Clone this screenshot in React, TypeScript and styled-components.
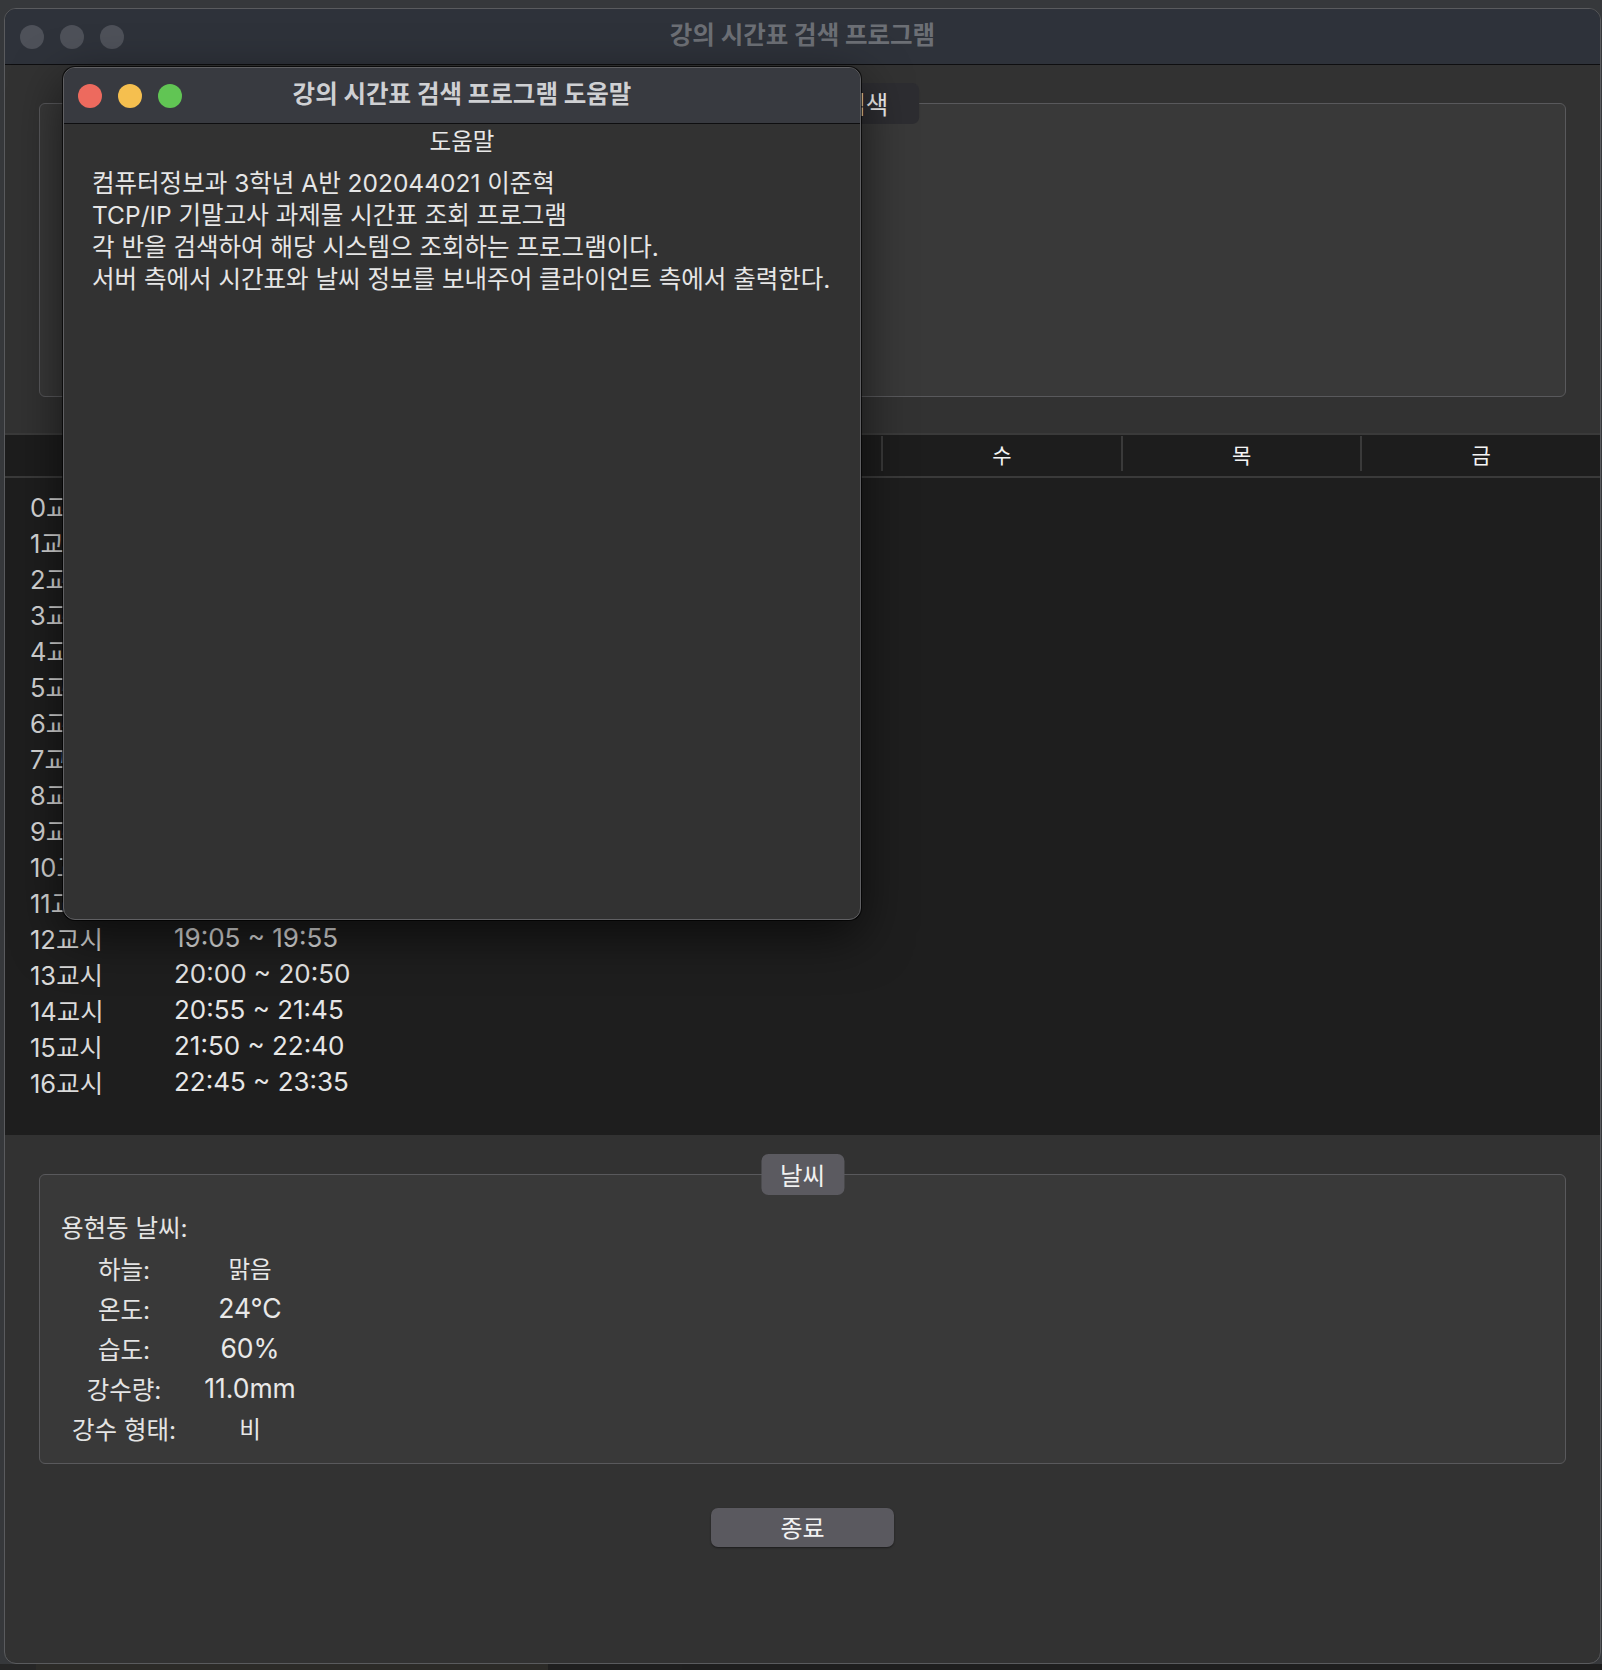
import styled, { createGlobalStyle } from "styled-components";

const GlobalStyle = createGlobalStyle`
  html, body {
    margin: 0;
    padding: 0;
    background: #36383b;
  }
  body {
    font-family: Inter, "Noto Sans CJK KR", "Noto Sans", sans-serif;
    color: #e6e6e6;
  }
`;

const Page = styled.div`
  position: relative;
  width: 1602px;
  height: 1670px;
  display: flex;
  flex-direction: column;
  background: #36383b;
  overflow: hidden;
`;

const TopStrip = styled.div`
  height: 8px;
  flex: none;
`;

const MainWindow = styled.div`
  margin-left: 4px;
  width: 1597px;
  height: 1656px;
  flex: none;
  box-sizing: border-box;
  border: 1px solid #5a5b5e;
  border-radius: 12px;
  background: #323232;
  display: flex;
  flex-direction: column;
  overflow: hidden;
`;

const TitleBar = styled.div<{ $active?: boolean }>`
  flex: none;
  height: 56px;
  box-sizing: border-box;
  border-bottom: 1px solid #0e0e10;
  background: ${(p) => (p.$active ? "#383a40" : "#2e323a")};
  display: grid;
  grid-template-columns: 1fr auto 1fr;
  align-items: center;
`;

const Lights = styled.div<{ $pad: number }>`
  display: flex;
  gap: 16px;
  padding-left: ${(p) => p.$pad}px;
`;

const Light = styled.span<{ $color: string }>`
  width: 24px;
  height: 24px;
  border-radius: 50%;
  background: ${(p) => p.$color};
`;

const Title = styled.div<{ $active?: boolean }>`
  font-size: 24.5px;
  font-weight: 700;
  color: ${(p) => (p.$active ? "#cfd0d3" : "#6c6f75")};
  margin-top: -7px;
`;

const Content = styled.div`
  flex: 1;
  display: flex;
  flex-direction: column;
`;

const GroupBox = styled.div<{ $top: number; $height: number }>`
  position: relative;
  margin: ${(p) => p.$top}px 34px 0;
  height: ${(p) => p.$height}px;
  flex: none;
  box-sizing: border-box;
  border: 1px solid #59595c;
  border-radius: 6px;
  background: #393939;
`;

const Legend = styled.div<{ $dark?: boolean }>`
  position: absolute;
  top: -21px;
  left: 50%;
  transform: translateX(-50%);
  height: 41px;
  padding: 0 ${(p) => (p.$dark ? 31 : 19)}px;
  display: flex;
  align-items: center;
  white-space: nowrap;
  border-radius: 7px;
  font-size: 24.5px;
  color: #f0f0f0;
  background: ${(p) => (p.$dark ? "#2d2d31" : "#5b5a60")};
`;

const Table = styled.div`
  margin-top: 36px;
  flex: none;
  background: #1e1e1e;
  display: flex;
  flex-direction: column;
`;

const HeaderRow = styled.div`
  display: grid;
  grid-template-columns: 397px repeat(5, 1fr);
  border-top: 2px solid #3a3a3a;
  border-bottom: 2px solid #3a3a3a;
  background: #1d1d1d;
  padding: 3px 0 5px;
`;

const HeaderCell = styled.div<{ $first?: boolean }>`
  height: 35px;
  display: flex;
  align-items: center;
  justify-content: center;
  border-left: ${(p) => (p.$first ? "none" : "2px solid #3a3a3a")};
  font-size: 21px;
  color: #f4f4f4;
  margin-top: -2px;
`;

const Body = styled.div`
  padding: 9px 0 36px;
  display: flex;
  flex-direction: column;
`;

const PeriodRow = styled.div`
  height: 36px;
  display: grid;
  grid-template-columns: 144px auto;
  align-items: center;
  padding-left: 25px;
`;

const PeriodLabel = styled.span`
  font-size: 25.5px;
  color: #dadada;
`;

const PeriodTime = styled.span`
  font-size: 26px;
  color: #e6e6e6;
`;

const WeatherBody = styled.div`
  padding: 33px 0 0 21px;
  display: flex;
  flex-direction: column;
`;

const WeatherHeading = styled.div`
  height: 40px;
  line-height: 40px;
  font-size: 24.5px;
  color: #e4e4e4;
`;

const WeatherGrid = styled.div`
  display: grid;
  grid-template-columns: 126px 126px;
  grid-auto-rows: 40px;
  align-items: center;
  justify-items: center;
`;

const WeatherKey = styled.span`
  font-size: 24.5px;
  color: #e4e4e4;
`;

const WeatherValue = styled.span<{ $numeric?: boolean }>`
  font-size: ${(p) => (p.$numeric ? 26.5 : 23.5)}px;
  color: #e8e8e8;
`;

const ExitButton = styled.button`
  margin-top: 44px;
  align-self: center;
  width: 183px;
  height: 39px;
  border: none;
  border-radius: 7px;
  background: #5a595f;
  box-shadow: 0 1px 2px rgba(0, 0, 0, 0.45);
  font-family: inherit;
  font-size: 24px;
  color: #f2f2f2;
  padding: 0 0 3px;
`;

const BottomStrip = styled.div`
  flex: 1;
  display: grid;
  grid-template-columns: 36px 512px 134px 1fr;
  background: #1f1f1f;
`;

const StripPart = styled.div<{ $bg: string }>`
  background: ${(p) => p.$bg};
`;

const Dialog = styled.div`
  position: absolute;
  left: 63px;
  top: 67px;
  width: 798px;
  height: 853px;
  box-sizing: border-box;
  border: 1px solid #606063;
  border-radius: 12px;
  background: #323232;
  display: flex;
  flex-direction: column;
  overflow: hidden;
  box-shadow: 0 0 0 1px rgba(0, 0, 0, 0.7), 0 16px 50px rgba(0, 0, 0, 0.6);
`;

const DialogBody = styled.div`
  padding: 2px 0 0 28px;
  display: flex;
  flex-direction: column;
`;

const DialogHeading = styled.div`
  height: 32px;
  line-height: 32px;
  text-align: center;
  padding-right: 28px;
  font-size: 23.5px;
  color: #e8e8e8;
  margin-bottom: 9px;
`;

const HelpLine = styled.div`
  height: 32px;
  line-height: 32px;
  font-size: 24.5px;
  color: #e6e6e6;
  white-space: nowrap;
`;

const periods = [
  "08:05 ~ 08:55",
  "09:00 ~ 09:50",
  "09:55 ~ 10:45",
  "10:50 ~ 11:40",
  "11:45 ~ 12:35",
  "12:40 ~ 13:30",
  "13:35 ~ 14:25",
  "14:30 ~ 15:20",
  "15:25 ~ 16:15",
  "16:20 ~ 17:10",
  "17:15 ~ 18:05",
  "18:10 ~ 19:00",
  "19:05 ~ 19:55",
  "20:00 ~ 20:50",
  "20:55 ~ 21:45",
  "21:50 ~ 22:40",
  "22:45 ~ 23:35",
];

const days = ["월", "화", "수", "목", "금"];

const weather: { key: string; value: string; numeric?: boolean }[] = [
  { key: "하늘:", value: "맑음" },
  { key: "온도:", value: "24°C", numeric: true },
  { key: "습도:", value: "60%", numeric: true },
  { key: "강수량:", value: "11.0mm", numeric: true },
  { key: "강수 형태:", value: "비" },
];

const helpLines = [
  "컴퓨터정보과 3학년 A반 202044021 이준혁",
  "TCP/IP 기말고사 과제물 시간표 조회 프로그램",
  "각 반을 검색하여 해당 시스템으 조회하는 프로그램이다.",
  "서버 측에서 시간표와 날씨 정보를 보내주어 클라이언트 측에서 출력한다.",
];

export default function App() {
  return (
    <Page>
      <GlobalStyle />
      <TopStrip />
      <MainWindow>
        <TitleBar>
          <Lights $pad={15}>
            <Light $color="#4e5159" />
            <Light $color="#4e5159" />
            <Light $color="#4e5159" />
          </Lights>
          <Title>강의 시간표 검색 프로그램</Title>
          <div />
        </TitleBar>
        <Content>
          <GroupBox $top={38} $height={294}>
            <Legend $dark>강의 시간표 검색</Legend>
          </GroupBox>

          <Table>
            <HeaderRow>
              <HeaderCell $first>시간</HeaderCell>
              {days.map((d) => (
                <HeaderCell key={d}>{d}</HeaderCell>
              ))}
            </HeaderRow>
            <Body>
              {periods.map((t, i) => (
                <PeriodRow key={i}>
                  <PeriodLabel>{i}교시</PeriodLabel>
                  <PeriodTime>{t}</PeriodTime>
                </PeriodRow>
              ))}
            </Body>
          </Table>

          <GroupBox $top={39} $height={290}>
            <Legend>날씨</Legend>
            <WeatherBody>
              <WeatherHeading>용현동 날씨:</WeatherHeading>
              <WeatherGrid>
                {weather.map((w) => [
                  <WeatherKey key={w.key}>{w.key}</WeatherKey>,
                  <WeatherValue key={w.key + "v"} $numeric={w.numeric}>
                    {w.value}
                  </WeatherValue>,
                ])}
              </WeatherGrid>
            </WeatherBody>
          </GroupBox>

          <ExitButton>종료</ExitButton>
        </Content>
      </MainWindow>
      <BottomStrip>
        <StripPart $bg="#262626" />
        <StripPart $bg="#2c2b28" />
        <StripPart $bg="#1f1f1f" />
        <StripPart $bg="#1e1e1e" />
      </BottomStrip>

      <Dialog>
        <TitleBar $active>
          <Lights $pad={14}>
            <Light $color="#ed6a5e" />
            <Light $color="#f5bf4f" />
            <Light $color="#61c554" />
          </Lights>
          <Title $active>강의 시간표 검색 프로그램 도움말</Title>
          <div />
        </TitleBar>
        <DialogBody>
          <DialogHeading>도움말</DialogHeading>
          {helpLines.map((l) => (
            <HelpLine key={l}>{l}</HelpLine>
          ))}
        </DialogBody>
      </Dialog>
    </Page>
  );
}
